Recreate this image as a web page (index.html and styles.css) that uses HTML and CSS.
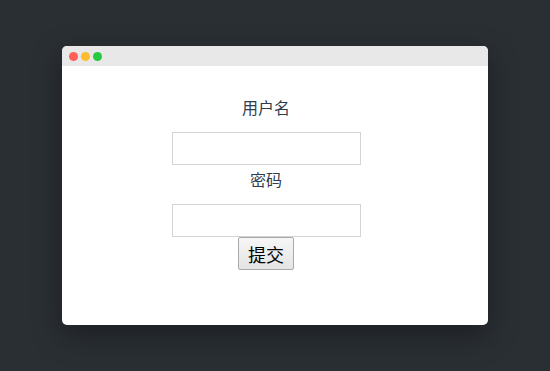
FILE: index.html
```html
<!DOCTYPE html>
<html lang="zh">
<head>
    <meta charset="UTF-8">
    <title>登录</title>
    <link rel="stylesheet" href="styles.css">
</head>
<body>
    <div class="window">
        <div class="titlebar">
            <span class="dot red"></span>
            <span class="dot yellow"></span>
            <span class="dot green"></span>
        </div>
        <form class="form">
            <label class="label" for="username">用户名</label>
            <input class="field" type="text" id="username">
            <label class="label second" for="password">密码</label>
            <input class="field" type="password" id="password">
            <button class="submit" type="button">提交</button>
        </form>
    </div>
</body>
</html>
```

FILE: styles.css
```css
* {
    margin: 0;
    padding: 0;
    box-sizing: border-box;
}

body {
    height: 100vh;
    background-color: #2a2f34;
    display: flex;
    justify-content: center;
    align-items: center;
    font-family: "Noto Sans CJK SC", "Noto Sans", sans-serif;
}

/* Window */
.window {
    width: 426px;
    height: 279px;
    background: #fff;
    border-radius: 5px;
    overflow: hidden;
    box-shadow: 0 10px 30px rgba(0, 0, 0, 0.35);
}

.titlebar {
    height: 20px;
    background: #e8e8e8;
    display: flex;
    align-items: center;
    gap: 3px;
    padding-left: 7px;
}

.dot {
    width: 9px;
    height: 9px;
    border-radius: 50%;
}

.red { background: #ff5f57; }
.yellow { background: #febc2e; }
.green { background: #28c840; }

/* Form */
.form {
    display: flex;
    flex-direction: column;
    align-items: center;
    padding: 30px 18px 0 0;
}

.label {
    font-size: 16px;
    line-height: 22px;
    color: #2c3e50;
    margin-bottom: 14px;
}

.label.second {
    margin-top: 3px;
}

.field {
    width: 189px;
    height: 33px;
    border: 1px solid #d4d4d4;
    outline: none;
}

.submit {
    font-family: "Noto Sans CJK SC", sans-serif;
    font-size: 18px;
    line-height: 24px;
    height: 33px;
    padding: 0 9px;
    color: #000;
    background: linear-gradient(#f6f6f6, #e4e4e4);
    border: 1px solid #a9a9a9;
    border-radius: 2px;
}
```
